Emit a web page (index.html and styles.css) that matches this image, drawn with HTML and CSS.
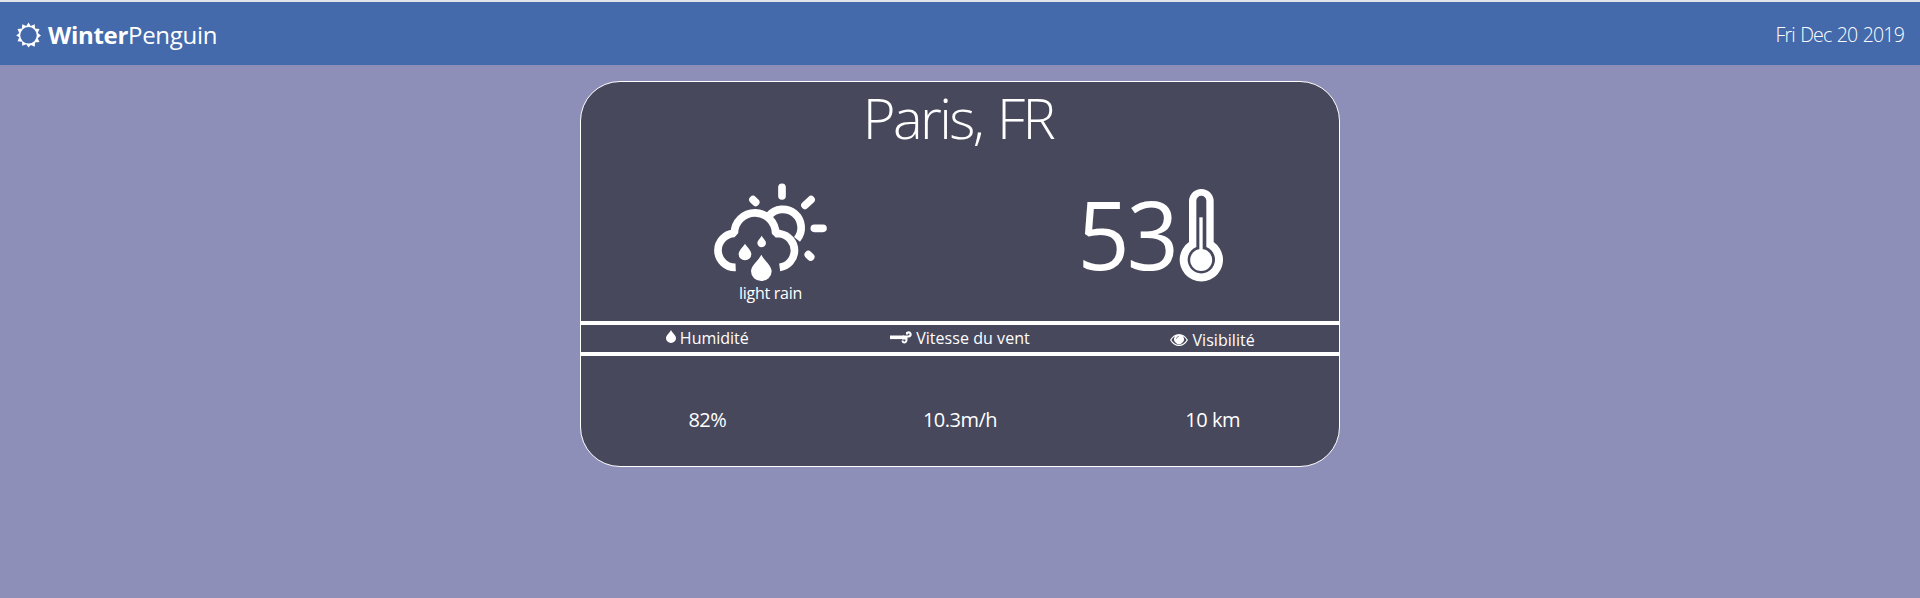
FILE: index.html
```html
<!DOCTYPE html>
<html lang="fr">
<head>
<meta charset="utf-8">
<title>WinterPenguin</title>
<link rel="stylesheet" href="styles.css">
</head>
<body>
<header class="navbar">
  <div class="brand">
    <svg class="brand-icon" viewBox="0 0 26 26"><path fill="#fff" fill-rule="evenodd" d="M13 0l2.300 3.600 4.200-1.900.3 4.500 4.600.5-1.800 4.100 3.400 2.700-3.400 2.800 1.800 4.100-4.600.5-.3 4.400-4.200-1.800L13 26l-2.300-3.500-4.200 1.800-.3-4.400-4.600-.5 1.800-4.100L.2 13.500l3.200-2.700-1.800-4.100 4.600-.5.3-4.500 4.200 1.900zM13 4.700a8.600 8.600 0 1 0 0 17.200A8.600 8.600 0 0 0 13 4.700z"/></svg>
    <span class="brand-name"><b>Winter</b><span class="brand-tail">Penguin</span></span>
  </div>
  <div class="date">Fri Dec 20 2019</div>
</header>
<main class="card">
  <h1 class="city">Paris, FR</h1>
  <section class="current">
    <div class="sky">
      <svg class="sky-icon" viewBox="33 15 360 309" fill="none" stroke="#fff" stroke-width="23">
        <path d="M206 123A54.500 54.500 0 0 1 291 193"/>
        <path d="M107 277A51 51 0 0 1 103 175A62 62 0 0 1 227 176H240A51 51 0 0 1 239 277" stroke-linejoin="bevel"/>
        <path stroke-linecap="round" d="M246 37V63M315 91L333 74M343 160H369M325 239L332 246M159 74L167 82"/>
        <g fill="#fff" stroke="none">
          <path d="M135 206C141 216 154 226 154 238A19 18 0 0 1 116 238C116 226 129 216 135 206Z"/>
          <path d="M185 182C189 190 198 197 198 204A13 12.500 0 0 1 172 204C172 197 181 190 185 182Z"/>
          <path d="M184 239C192 256 215 271 215 289A31 29 0 0 1 153 289C153 271 176 256 184 239Z"/>
        </g>
      </svg>
      <span class="sky-text">light rain</span>
    </div>
    <div class="temp">
      <span class="temp-value">53</span>
      <svg class="temp-icon" viewBox="327 15 135 309" fill="#fff">
        <path fill-rule="evenodd" d="M357 201V79A37 37 0 0 1 431 79V201A65 65 0 1 1 357 201ZM379 216V77A15 15 0 0 1 409 77V216A41 41 0 1 1 379 216Z"/>
        <path d="M388 127H398V225H388Z"/><circle cx="393.500" cy="255" r="33"/>
      </svg>
    </div>
  </section>
  <section class="labels">
    <div class="label">
      <svg class="drop" viewBox="0 0 10 13"><path fill="#fff" d="M5 0C6 3 10 5 10 8.200A5 4.800 0 0 1 0 8.200C0 5 4 3 5 0Z"/></svg>
      <span class="label-humidity">Humidité</span>
    </div>
    <div class="label">
      <svg class="wind" viewBox="0 0 22 13" fill="none" stroke="#fff"><path stroke-width="3.600" d="M0 6.300H14"/><path stroke-width="2" d="M13 5.500H18.500Q21 5 20.600 2.700Q19.500 .600 17 1.800V3.600M12 7.500H16.500Q16.800 11.300 14.500 11.400Q12.500 11.400 12.600 9.500"/></svg>
      <span class="label-wind">Vitesse du vent</span>
    </div>
    <div class="label label-low">
      <svg class="eye" viewBox="0 0 18 12"><path fill="#fff" fill-rule="evenodd" d="M0 6Q3.500 0 9 0T18 6Q14.500 12 9 12T0 6ZM1.400 6Q4.200 10.800 9 10.800T16.600 6Q15.300 3.500 12.900 2.200A4.900 4.900 0 1 1 5.100 2.200Q2.700 3.500 1.400 6Z"/><path d="M6.300 4.800Q6.700 2.500 9 2.200" fill="none" stroke="#48485d" stroke-width=".6"/></svg>
      <span class="label-visibility">Visibilité</span>
    </div>
  </section>
  <section class="values">
    <div class="value value-humidity">82%</div>
    <div class="value value-wind">10.3m/h</div>
    <div class="value value-visibility">10 km</div>
  </section>
</main>
</body>
</html>
```
FILE: styles.css
```css
* { box-sizing: border-box; }
body {
  margin: 0;
  height: 598px;
  overflow: hidden;
  border-top: 2px solid #e1e4e8;
  background: #8e8fb9;
  color: #fff;
  font-family: "Open Sans", "Noto Sans", sans-serif;
}
svg { display: block; flex: none; }
span { white-space: nowrap; }
.navbar {
  display: flex;
  justify-content: space-between;
  height: 63px;
  padding: 0 16px;
  background: #446aac;
}
.brand { display: flex; gap: 7px; }
.brand-icon { width: 25px; height: 26px; margin-top: 20px; }
.brand-name { font-size: 24px; line-height: 65px; }
.brand-name b { font-weight: 700; letter-spacing: -0.3px; }
.brand-tail { letter-spacing: -0.3px; }
.date { font-size: 19.5px; line-height: 66px; font-weight: 300; letter-spacing: -0.8px; word-spacing: 1px; }
.card {
  width: 760px;
  height: 386px;
  margin: 16px auto 0;
  border: 1px solid #fff;
  border-radius: 40px;
  background: #48485d;
}
.city {
  margin: 0;
  height: 68px;
  padding-right: 4px;
  text-align: center;
  font-size: 56px;
  line-height: 70px;
  font-weight: 300;
  letter-spacing: -2.6px;
  word-spacing: 3px;
}
.current {
  display: grid;
  grid-template-columns: 1fr 1fr;
  height: 171px;
  padding-top: 30px;
}
.sky { display: flex; flex-direction: column; align-items: center; }
.sky-icon { width: 120px; height: 103px; }
.sky-text { font-size: 16px; line-height: 20px; letter-spacing: -0.25px; }
.temp { display: flex; justify-content: center; }
.temp-value {
  font-size: 96px;
  line-height: 105px;
  height: 103px;
  letter-spacing: -3.2px;
  transform: scaleX(0.95);
}
.temp-icon { width: 45px; height: 103px; }
.labels, .values { display: grid; grid-template-columns: repeat(3, 1fr); }
.labels {
  height: 35px;
  border-top: 4px solid #fff;
  border-bottom: 4px solid #fff;
}
.label {
  display: flex;
  justify-content: center;
  gap: 4px;
  height: 27px;
  font-size: 16px;
  line-height: 26px;
}
.label-low { padding-top: 2px; }
.drop { width: 10px; height: 13px; margin-top: 5px; }
.wind { width: 22px; height: 13px; margin-top: 6px; }
.eye { width: 18px; height: 12px; margin-top: 7px; }
.label-humidity { letter-spacing: 0; }
.label-wind, .label-visibility { letter-spacing: 0.05px; }
.values { padding-top: 49px; }
.value { text-align: center; font-size: 20px; line-height: 30px; letter-spacing: -0.5px; }
```
